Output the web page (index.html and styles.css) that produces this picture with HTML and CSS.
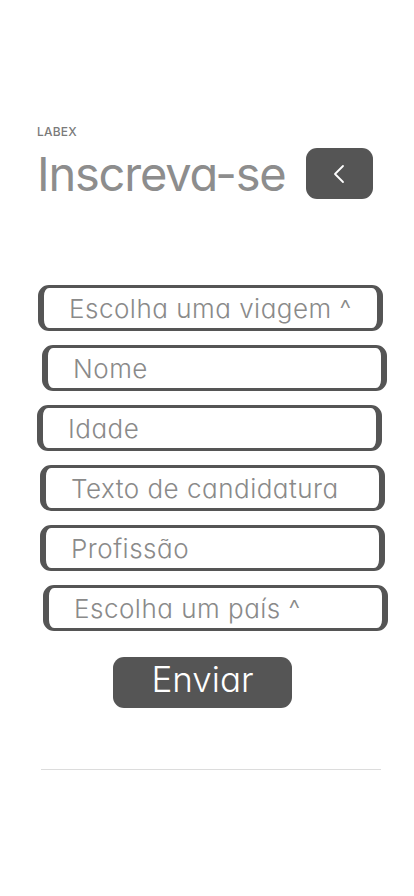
FILE: index.html
```html
<!DOCTYPE html>
<html lang="pt">
<head>
<meta charset="utf-8">
<title>LabeX - Inscreva-se</title>
<link rel="stylesheet" href="styles.css">
</head>
<body>
<main class="page">
  <header class="header">
    <div class="brand">LABEX</div>
    <div class="title-row">
      <h1 class="title">Inscreva-se</h1>
      <button class="back-btn" type="button" aria-label="Voltar">
        <svg width="14" height="20" viewBox="0 0 14 20" aria-hidden="true">
          <path d="M11 2 L3 10 L11 18" fill="none" stroke="#ffffff" stroke-width="1.8" stroke-linecap="round" stroke-linejoin="round"/>
        </svg>
      </button>
    </div>
  </header>
  <form class="form">
    <div class="field shift-a">Escolha uma viagem ^</div>
    <div class="field shift-b">Nome</div>
    <div class="field shift-c">Idade</div>
    <div class="field shift-d">Texto de candidatura</div>
    <div class="field shift-d">Profissão</div>
    <div class="field shift-e">Escolha um país ^</div>
  </form>
  <button class="submit" type="button">Enviar</button>
  <hr class="divider">
</main>
</body>
</html>
```
FILE: styles.css
```css
html, body {
  margin: 0;
  padding: 0;
  background: #ffffff;
}
body {
  font-family: Inter, "Noto Sans", sans-serif;
  font-feature-settings: "cv11" 1;
}
.page {
  padding-top: 125px;
  display: flex;
  flex-direction: column;
}
.header {
  padding-left: 37px;
}
.brand {
  font-size: 12px;
  line-height: 14px;
  font-weight: 500;
  color: #7a7a7a;
  letter-spacing: 0.2px;
}
.title-row {
  display: flex;
  align-items: center;
  gap: 20px;
  margin-top: 9px;
}
.title {
  margin: 0;
  font-size: 47px;
  line-height: 51px;
  font-weight: 400;
  color: #8d8d8d;
  letter-spacing: -1.2px;
}
.back-btn {
  width: 67px;
  height: 51px;
  border: none;
  border-radius: 11px;
  background: #555555;
  display: flex;
  align-items: center;
  justify-content: center;
  padding: 0;
}
.form {
  margin: 86px 0 0 0;
  display: flex;
  flex-direction: column;
  gap: 14px;
}
.field {
  box-sizing: border-box;
  width: 345px;
  height: 46px;
  border-style: solid;
  border-color: #555555;
  border-width: 3px 6px;
  border-radius: 11px;
  padding-left: 25px;
  display: flex;
  align-items: center;
  font-size: 26px;
  font-weight: 300;
  letter-spacing: 0.5px;
  color: #8a8a8a;
  white-space: nowrap;
}
.shift-a { margin-left: 38px; }
.shift-b { margin-left: 42px; }
.shift-c { margin-left: 37px; }
.shift-d { margin-left: 40px; }
.shift-e { margin-left: 43px; }
.submit {
  margin: 26px 0 0 113px;
  width: 179px;
  height: 51px;
  border: none;
  border-radius: 11px;
  background: #555555;
  color: #ffffff;
  font-family: Inter, "Noto Sans", sans-serif;
  font-feature-settings: "cv11" 1;
  font-size: 35px;
  font-weight: 300;
  line-height: 40px;
  padding: 0 0 8px 0;
}
.divider {
  margin: 61px 0 0 41px;
  width: 340px;
  border: none;
  height: 1px;
  background: #dcdcdc;
}
```
